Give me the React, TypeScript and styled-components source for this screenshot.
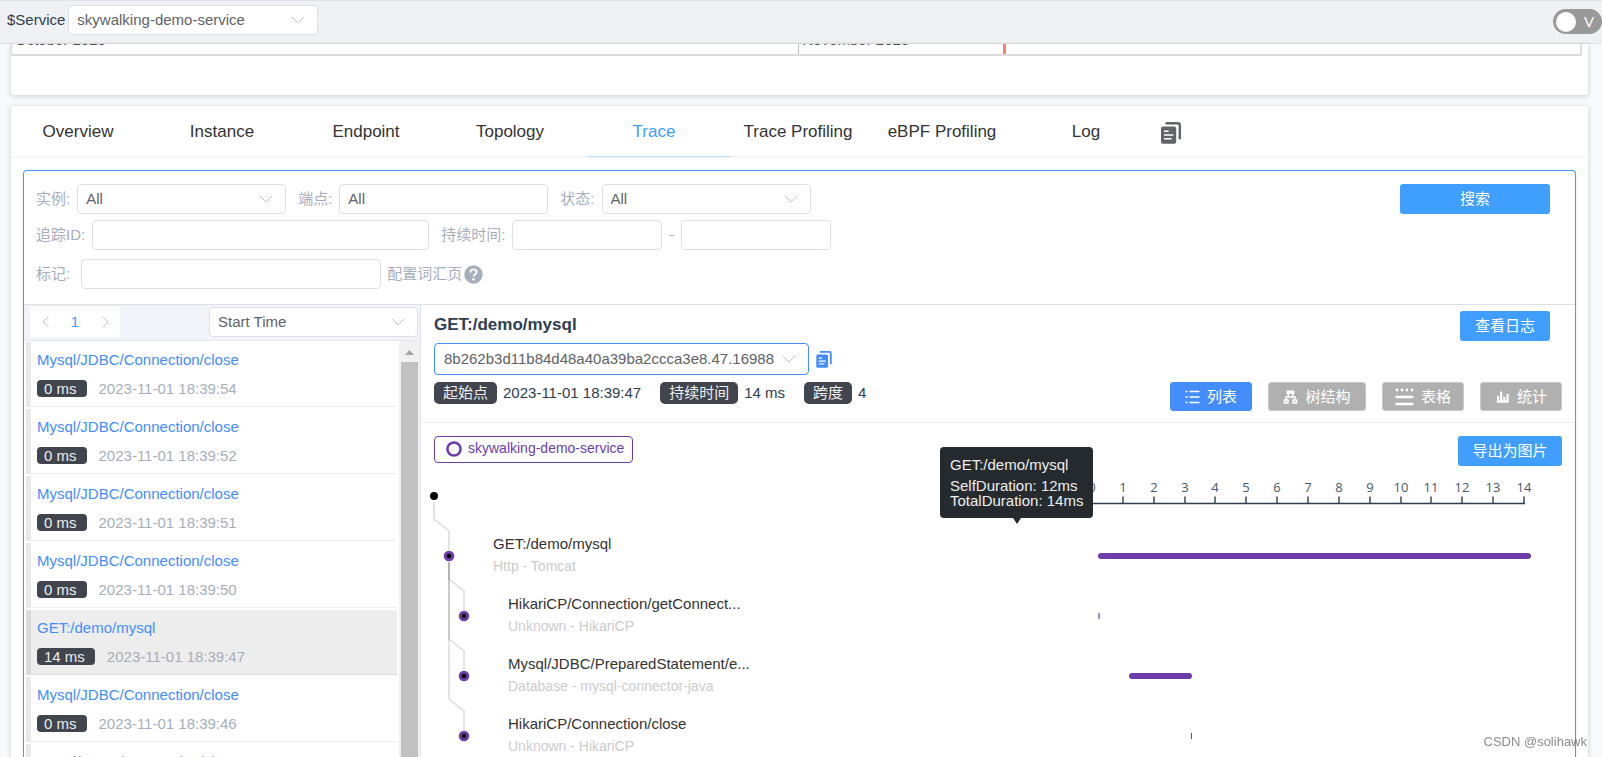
import React, { useState } from "react";
import styled, { createGlobalStyle } from "styled-components";

const GlobalStyle = createGlobalStyle`
  *, *::before, *::after { box-sizing: border-box; }
  body {
    margin: 0;
    background: #f7f9fa;
    color: #2c3e50;
    font-family: "Liberation Sans", Arial, "Noto Sans CJK SC", sans-serif;
    font-size: 15px;
    line-height: 20px;
  }
  button, input, select { font: inherit; color: inherit; }
`;

/* ---------- shared controls ---------- */

const SelectBox = styled.span<{ $width: number; $active?: boolean }>`
  position: relative;
  display: inline-block;
  flex: none;
  width: ${(p) => p.$width}px;
  height: ${(p) => (p.$active ? 32 : 30)}px;

  select {
    appearance: none;
    display: block;
    width: 100%;
    height: 100%;
    padding: 0 28px 0 ${(p) => (p.$active ? 9 : 8)}px;
    border: 1px solid ${(p) => (p.$active ? "#448dfe" : "#dcdfe6")};
    border-radius: 4px;
    background: #fff;
    color: #606266;
    outline: none;
  }

  svg {
    position: absolute;
    right: 13px;
    top: 50%;
    margin-top: -4px;
    pointer-events: none;
  }
`;

function Select(props: { label: string; value: string; width: number; id?: string; active?: boolean }) {
  return (
    <SelectBox $width={props.width} $active={props.active}>
      <select id={props.id} aria-label={props.label} defaultValue={props.value}>
        <option>{props.value}</option>
      </select>
      <svg width="14" height="8" viewBox="0 0 14 8" fill="none" stroke="#c0c4cc">
        <path d="M1 1l6 6 6-6" />
      </svg>
    </SelectBox>
  );
}

const TextInput = styled.input<{ $width: number }>`
  flex: none;
  width: ${(p) => p.$width}px;
  height: 30px;
  padding: 0 8px 2px;
  border: 1px solid #dcdfe6;
  border-radius: 4px;
  background: #fff;
  color: #606266;
  outline: none;
`;

const PrimaryButton = styled.button<{ $width: number }>`
  flex: none;
  width: ${(p) => p.$width}px;
  height: 30px;
  padding: 0;
  border: 0;
  border-radius: 3px;
  background: #409eff;
  color: #fff;
  cursor: pointer;
`;

const PlainButton = styled.button`
  display: flex;
  align-items: center;
  justify-content: center;
  padding: 0;
  border: 0;
  background: none;
  cursor: pointer;
`;

function CopyIcon({ width, height }: { width: number; height: number }) {
  return (
    <svg width={width} height={height} viewBox="0 0 20 22" fill="none">
      <path d="M4.5 1.2h12.3a2 2 0 0 1 2 2v14" stroke="currentColor" strokeWidth="2.4" />
      <rect x="0" y="4.4" width="15.2" height="17.4" rx="2" fill="currentColor" />
      <path d="M3 9.2h4.6M3 13h9.4M3 16.8h7.6" stroke="#fff" strokeWidth="1.5" />
    </svg>
  );
}

/* ---------- page frame ---------- */

const Page = styled.div`
  display: flex;
  flex-direction: column;
  height: 100vh;
  overflow: hidden;
`;

const TopBar = styled.header`
  display: flex;
  flex: none;
  align-items: flex-start;
  justify-content: space-between;
  height: 44px;
  padding: 4px 0 0 7px;
  border: solid #dfe4e8;
  border-width: 1px 0;
  background: #f0f1f5;
`;

const ServiceField = styled.div`
  display: flex;
  align-items: center;
  gap: 3px;
`;

const Toggle = styled.label`
  display: flex;
  align-items: center;
  justify-content: space-between;
  width: 49px;
  height: 25px;
  margin-top: 4px;
  padding: 0 8px 0 3px;
  border-radius: 13px;
  background: #999;
  color: #fff;
  cursor: pointer;

  input {
    appearance: none;
    width: 20px;
    height: 20px;
    margin: 0;
    border-radius: 50%;
    background: #fff;
  }
`;

const Content = styled.main`
  display: flex;
  flex: 1;
  flex-direction: column;
  gap: 11px;
  min-height: 0;
  padding: 0 14px 0 11px;
`;

const Card = styled.section<{ $fill?: boolean }>`
  display: flex;
  flex: ${(p) => (p.$fill ? "1" : "none")};
  flex-direction: column;
  min-height: 0;
  border-radius: ${(p) => (p.$fill ? "3px 3px 0 0" : "0 0 3px 3px")};
  background: #fff;
  box-shadow: 0 1px 4px 1px rgba(0, 0, 0, 0.12);
`;

const EventTimeline = styled.div`
  display: flex;
  height: 12px;
  margin: 0 6px 39px 0;
  overflow: hidden;
  border: solid #dcdcdc;
  border-width: 0 2px 2px 1px;
`;

const Month = styled.div<{ $grow: number }>`
  display: flex;
  flex: ${(p) => p.$grow} 1 0;
  align-items: flex-end;
  padding: 0 0 4px 3px;
  color: #4d4d4d;

  & + & {
    border-left: 1px solid #bfbfbf;
  }
`;

const NowMark = styled.i`
  width: 3px;
  height: 12px;
  margin: 0 0 -4px 94px;
  background: #ff7f6e;
`;

/* ---------- tabs ---------- */

const Tabs = styled.nav`
  display: flex;
  flex: none;
  height: 52px;
  border-bottom: 2px solid #f5f6f8;
`;

const Tab = styled.button<{ $active?: boolean }>`
  flex: none;
  width: 144px;
  height: 51px;
  padding: 2px 10px 0 0;
  border: 0;
  border-bottom: 1px solid ${(p) => (p.$active ? "#bcdcfb" : "transparent")};
  background: none;
  color: ${(p) => (p.$active ? "#409eff" : "#333")};
  font-size: 17px;
  white-space: nowrap;
  cursor: pointer;
`;

const TabTool = styled(PlainButton)`
  height: 54px;
  margin: 0 0 0 -2px;
  color: #626469;
`;

/* ---------- trace panel ---------- */

const TracePanel = styled.div`
  display: flex;
  flex: 1;
  flex-direction: column;
  min-height: 0;
  margin: 12px 12px 0;
  border: 1px solid #409eff;
  border-bottom: 0;
  border-radius: 4px 4px 0 0;
  box-shadow: 0 0 3px rgba(0, 0, 0, 0.1);
  overflow: hidden;
`;

const Filters = styled.form`
  display: flex;
  flex: none;
  align-items: flex-start;
  justify-content: space-between;
  padding: 13px 25px 15px 12px;
  border-bottom: 1px solid #dcdfe6;
  color: #a7aebb;
`;

const FilterRows = styled.div`
  display: flex;
  flex-direction: column;
`;

const FilterRow = styled.div<{ $top?: number }>`
  display: flex;
  align-items: center;
  gap: 12px;
  margin-top: ${(p) => p.$top ?? 0}px;
`;

const Field = styled.div<{ $gap?: number }>`
  display: flex;
  align-items: center;
  gap: ${(p) => p.$gap ?? 7}px;
`;

const VocabularyLink = styled.a`
  display: flex;
  align-items: center;
  gap: 2px;
  margin-left: -6px;
  color: inherit;
  text-decoration: none;
`;

const Body = styled.div`
  display: flex;
  flex: 1;
  min-height: 0;
`;

/* ---------- trace list ---------- */

const ListPane = styled.aside`
  display: flex;
  flex: none;
  flex-direction: column;
  width: 397px;
  border-right: 1px solid #dfe2e8;
`;

const ListHeader = styled.div`
  display: flex;
  flex: none;
  justify-content: space-between;
  height: 36px;
  padding: 2px 2px 0 6px;
  border-bottom: 1px solid #e3e6ec;
  background: #f3f4f9;
`;

const Pager = styled.nav`
  display: flex;
  height: 30px;
  background: #fff;

  button {
    width: 30px;
  }
`;

const PageNumber = styled(PlainButton)`
  color: #409eff;
`;

const ListScroll = styled.div`
  display: flex;
  flex: 1;
  min-height: 0;
`;

const TraceList = styled.ul`
  display: flex;
  flex: 1;
  flex-direction: column;
  gap: 2px;
  margin: 0;
  padding: 1px 2px 0;
  overflow: hidden;
  list-style: none;
`;

const TraceItem = styled.li<{ $selected?: boolean }>`
  flex: none;
  height: 65px;
  padding: 8px 0 0 6px;
  border-left: 5px solid ${(p) => (p.$selected ? "#d9d9d9" : "#e8e8e8")};
  background: ${(p) => (p.$selected ? "#ededed" : "#fff")};
  box-shadow: inset 0 -1px 0 ${(p) => (p.$selected ? "#dadada" : "#ebebeb")};
`;

const TraceLink = styled.a`
  display: block;
  margin-bottom: 10px;
  color: #448dfe;
  text-decoration: none;
`;

const TraceMeta = styled.div`
  display: flex;
  align-items: center;
  gap: 12px;
  height: 17px;
  color: #a7aebb;
`;

const DurationBadge = styled.span`
  height: 17px;
  padding: 0 10px 0 7px;
  border-radius: 4px;
  background: #40454e;
  color: #eee;
  line-height: 17px;
`;

const ScrollTrack = styled.div`
  display: flex;
  flex: none;
  flex-direction: column;
  align-items: center;
  width: 21px;
  background: #f1f1f1;

  svg {
    flex: none;
    margin: 9px 0 7px;
  }
`;

const ScrollThumb = styled.div`
  flex: 1;
  width: 17px;
  background: #c1c1c1;
`;

/* ---------- trace detail ---------- */

const DetailPane = styled.section`
  display: flex;
  flex: 1;
  flex-direction: column;
  min-width: 0;
`;

const DetailHeader = styled.header`
  display: flex;
  flex: none;
  flex-direction: column;
  padding: 6px 13px 11px;
  border-bottom: 1px solid #ebeef0;
`;

const DetailTitleRow = styled.div`
  display: flex;
  justify-content: space-between;
  padding-right: 12px;
`;

const DetailTitle = styled.h1`
  margin: 0;
  font-size: 17px;
  line-height: 28px;
`;

const TraceIdRow = styled.div`
  display: flex;
  align-items: center;
  gap: 7px;
  margin-top: 2px;
  color: #448dfe;
`;

const SummaryRow = styled.div`
  display: flex;
  align-items: flex-start;
  justify-content: space-between;
  margin-top: 7px;
`;

const Summary = styled.dl`
  display: flex;
  gap: 19px;
  margin: 0;
  line-height: 22px;

  div {
    display: flex;
    gap: 6px;
  }

  dt {
    padding: 0 9px;
    border-radius: 5px;
    background: #40454e;
    color: #eee;
  }

  dd {
    margin: 0;
  }
`;

const ViewSwitch = styled.div`
  display: flex;
  gap: 16px;
`;

const ViewButton = styled.button<{ $width: number; $active?: boolean }>`
  display: flex;
  align-items: center;
  justify-content: center;
  gap: 7px;
  width: ${(p) => p.$width}px;
  height: 29px;
  padding: 0;
  border: 1px solid ${(p) => (p.$active ? "#448dfe" : "#c6c8cd")};
  border-radius: 3px;
  background: ${(p) => (p.$active ? "#448dfe" : "#b0b0b0")};
  color: #fff;
  cursor: pointer;
`;

const ChartArea = styled.div`
  position: relative;
  flex: 1;
  min-height: 0;
  padding-top: 13px;
`;

const ChartToolbar = styled.div`
  display: flex;
  align-items: flex-start;
  justify-content: space-between;
  height: 30px;
  padding: 0 13px;
`;

const ServiceTag = styled.span`
  display: flex;
  gap: 6px;
  height: 27px;
  padding: 3px 8px 0 11px;
  border: 1px solid #6c3da8;
  border-radius: 4px;
  color: #6c3da8;
  font-size: 14px;
  line-height: 16px;
`;

const Charts = styled.div`
  display: flex;
  justify-content: space-between;
  padding: 0 35px 0 3px;

  svg {
    flex: none;
    display: block;
  }
`;

const Tooltip = styled.div`
  position: absolute;
  top: 24px;
  right: 482px;
  width: 153px;
  padding: 8px 10px 10px;
  border-radius: 4px;
  background: #252a2f;
  color: #eee;
  line-height: 15px;
  white-space: nowrap;

  p {
    margin: 0;
  }

  p:first-child {
    margin-bottom: 3px;
    line-height: 20px;
  }

  &::after {
    content: "";
    position: absolute;
    top: 100%;
    left: 50%;
    margin-left: -4px;
    border: solid transparent;
    border-width: 6px 4px 0;
    border-top-color: #252a2f;
  }
`;

const Watermark = styled.span`
  position: fixed;
  right: 15px;
  bottom: 5px;
  color: rgba(110, 110, 110, 0.8);
  font-size: 13px;
`;

/* ---------- data ---------- */

const tabs = ["Overview", "Instance", "Endpoint", "Topology", "Trace", "Trace Profiling", "eBPF Profiling", "Log"];

const JDBC_CLOSE = "Mysql/JDBC/Connection/close";

const traces = [
  { name: JDBC_CLOSE, duration: 0, time: "2023-11-01 18:39:54" },
  { name: JDBC_CLOSE, duration: 0, time: "2023-11-01 18:39:52" },
  { name: JDBC_CLOSE, duration: 0, time: "2023-11-01 18:39:51" },
  { name: JDBC_CLOSE, duration: 0, time: "2023-11-01 18:39:50" },
  { name: "GET:/demo/mysql", duration: 14, time: "2023-11-01 18:39:47" },
  { name: JDBC_CLOSE, duration: 0, time: "2023-11-01 18:39:46" },
  { name: JDBC_CLOSE, duration: 0, time: "2023-11-01 18:39:45" },
];

const spans = [
  { name: "GET:/demo/mysql", sub: "Http - Tomcat", depth: 1, start: 18, width: 433, opacity: 1 },
  { name: "HikariCP/Connection/getConnect...", sub: "Unknown - HikariCP", depth: 2, start: 18, width: 2, opacity: 0.6 },
  { name: "Mysql/JDBC/PreparedStatement/e...", sub: "Database - mysql-connector-java", depth: 2, start: 49, width: 63, opacity: 1 },
  { name: "HikariCP/Connection/close", sub: "Unknown - HikariCP", depth: 2, start: 111, width: 1, opacity: 1 },
];

const views = [
  {
    label: "列表",
    width: 82,
    icon: (
      <svg width="15" height="14" viewBox="0 0 15 14" stroke="currentColor" strokeWidth="1.6">
        <path d="M0.5 1.5h2M0.5 7h2M0.5 12.5h2M4.5 1.5h10M4.5 7h10M4.5 12.5h10" />
      </svg>
    ),
  },
  {
    label: "树结构",
    width: 98,
    icon: (
      <svg width="15" height="14" viewBox="0 0 15 14" fill="none" stroke="currentColor">
        <rect x="3.5" y="0.5" width="8" height="3.6" rx="0.8" fill="currentColor" stroke="none" />
        <rect x="1.4" y="9.8" width="3.6" height="3" rx="0.6" strokeWidth="1.8" />
        <rect x="10" y="9.8" width="3.6" height="3" rx="0.6" strokeWidth="1.8" />
        <path d="M5.2 3.8v2.8M9.8 3.8v2.8M3 9.6V7h9v2.6" strokeWidth="1.5" />
      </svg>
    ),
  },
  {
    label: "表格",
    width: 82,
    icon: (
      <svg width="19" height="18" viewBox="0 0 19 18" fill="none" stroke="currentColor" strokeLinecap="round">
        <path d="M2 2h.01M7 2h.01M12 2h.01M17 2h.01" strokeWidth="2.8" />
        <path d="M1.5 9h16M1.5 16h16" strokeWidth="2.4" />
      </svg>
    ),
  },
  {
    label: "统计",
    width: 82,
    icon: (
      <svg width="15" height="14" viewBox="0 0 15 14" stroke="currentColor" strokeWidth="2.2">
        <path d="M3 12.5V6M6.2 12.5V1.5M9.4 12.5V7M12.6 12.5V4M1.9 11.6h11.8" />
      </svg>
    ),
  },
];

/* ---------- charts ---------- */

const rowY = (index: number) => 90 + index * 60;
const nodeX = (depth: number) => 10 + depth * 15;

function SpanTree() {
  return (
    <svg width="400" height="310" fontFamily="inherit">
      <g fill="none" stroke="#000" strokeOpacity="0.11" strokeWidth="2">
        {spans.map((s, i) => {
          const fromY = s.depth === 1 ? 30 : rowY(0);
          const fromX = nodeX(s.depth - 1);
          const y = rowY(i);
          return <path key={i} d={`M${fromX} ${fromY + 6}V${y - 37}L${fromX + 15} ${y - 25}V${y - 6}`} />;
        })}
      </g>
      <circle cx="10" cy="30" r="4" />
      {spans.map((s, i) => (
        <g key={i}>
          <circle cx={nodeX(s.depth)} cy={rowY(i)} r="3.8" fill="#000" stroke="#6c3da8" strokeWidth="3" />
          <text x={nodeX(s.depth) + 44} y={rowY(i) - 7} fontSize="15" fill="#333">
            {s.name}
          </text>
          <text x={nodeX(s.depth) + 44} y={rowY(i) + 15} fontSize="14" fill="#ccc">
            {s.sub}
          </text>
        </g>
      ))}
    </svg>
  );
}

function SpanBars() {
  const tickX = (n: number) => Math.round(12 + (n * 432) / 14);
  return (
    <svg width="460" height="310">
      <path
        d={`M12 38H445${Array.from({ length: 15 }, (_, n) => `M${tickX(n)} 31v7`).join("")}`}
        transform="translate(0 -.5)"
        fill="none"
        stroke="#2c3e50"
        strokeWidth="1.4"
      />
      <g fontFamily='"Open Sans", "Noto Sans", sans-serif' fontSize="13" fill="#4a5868" textAnchor="middle">
        {Array.from({ length: 15 }, (_, n) => (
          <text key={n} x={tickX(n)} y="26">
            {n}
          </text>
        ))}
      </g>
      {spans.map((s, i) => (
        <rect
          key={i}
          x={s.start}
          y={rowY(i) - 3}
          width={s.width}
          height="6"
          rx={s.width > 6 ? 3 : 0}
          fill="#6c3da8"
          fillOpacity={s.opacity}
        />
      ))}
    </svg>
  );
}

/* ---------- page ---------- */

export default function App() {
  const [activeTab, setActiveTab] = useState("Trace");
  const [selected, setSelected] = useState(4);
  const [view, setView] = useState("列表");

  return (
    <Page>
      <GlobalStyle />
      <TopBar>
        <ServiceField>
          <label htmlFor="service">$Service</label>
          <Select id="service" label="Service" value="skywalking-demo-service" width={250} />
        </ServiceField>
        <Toggle>
          <input type="checkbox" />
          <span>V</span>
        </Toggle>
      </TopBar>

      <Content>
        <Card>
          <EventTimeline>
            <Month $grow={787}>October 2023</Month>
            <Month $grow={781}>
              November 2023
              <NowMark />
            </Month>
          </EventTimeline>
        </Card>

        <Card $fill>
          <Tabs>
            {tabs.map((t) => (
              <Tab key={t} $active={t === activeTab} onClick={() => setActiveTab(t)}>
                {t}
              </Tab>
            ))}
            <TabTool aria-label="Copy">
              <CopyIcon width={20} height={22} />
            </TabTool>
          </Tabs>

          <TracePanel>
            <Filters onSubmit={(e) => e.preventDefault()}>
              <FilterRows>
                <FilterRow>
                  <Field>
                    <label htmlFor="instance">实例:</label>
                    <Select id="instance" label="实例" value="All" width={209} />
                  </Field>
                  <Field>
                    <label htmlFor="endpoint">端点:</label>
                    <TextInput id="endpoint" $width={209} defaultValue="All" />
                  </Field>
                  <Field>
                    <label htmlFor="status">状态:</label>
                    <Select id="status" label="状态" value="All" width={209} />
                  </Field>
                </FilterRow>
                <FilterRow $top={6}>
                  <Field>
                    <label htmlFor="trace-id">追踪ID:</label>
                    <TextInput id="trace-id" $width={337} />
                  </Field>
                  <Field>
                    <label htmlFor="duration-min">持续时间:</label>
                    <TextInput id="duration-min" $width={150} />
                    <span>-</span>
                    <TextInput aria-label="最长持续时间" $width={150} />
                  </Field>
                </FilterRow>
                <FilterRow $top={9}>
                  <Field $gap={11}>
                    <label htmlFor="tags">标记:</label>
                    <TextInput id="tags" $width={300} />
                  </Field>
                  <VocabularyLink href="#vocabulary">
                    配置词汇页
                    <svg width="19" height="19" viewBox="0 0 19 19" fill="none">
                      <circle cx="9.5" cy="9.5" r="9.2" fill="#a7aebb" />
                      <path
                        d="M6.4 7.4c0-1.8 1.3-3 3.1-3s3.1 1.1 3.1 2.8c0 2.2-3.1 2.3-3.1 4.4"
                        stroke="#fff"
                        strokeWidth="1.9"
                      />
                      <circle cx="9.5" cy="14.3" r="1.2" fill="#fff" />
                    </svg>
                  </VocabularyLink>
                </FilterRow>
              </FilterRows>
              <PrimaryButton $width={150}>搜索</PrimaryButton>
            </Filters>

            <Body>
              <ListPane>
                <ListHeader>
                  <Pager aria-label="Pages">
                    <PlainButton aria-label="Previous page">
                      <svg width="7" height="12" viewBox="0 0 7 12" fill="none" stroke="#c0c4cc">
                        <path d="M6.5 0.5L1 6l5.5 5.5" />
                      </svg>
                    </PlainButton>
                    <PageNumber>1</PageNumber>
                    <PlainButton aria-label="Next page">
                      <svg width="7" height="12" viewBox="0 0 7 12" fill="none" stroke="#c0c4cc">
                        <path d="M0.5 0.5L6 6 0.5 11.5" />
                      </svg>
                    </PlainButton>
                  </Pager>
                  <Select label="Sort by" value="Start Time" width={209} />
                </ListHeader>
                <ListScroll>
                  <TraceList>
                    {traces.map((t, i) => (
                      <TraceItem key={i} $selected={i === selected} onClick={() => setSelected(i)}>
                        <TraceLink href="#trace">{t.name}</TraceLink>
                        <TraceMeta>
                          <DurationBadge>{t.duration} ms</DurationBadge>
                          <time>{t.time}</time>
                        </TraceMeta>
                      </TraceItem>
                    ))}
                  </TraceList>
                  <ScrollTrack aria-hidden="true">
                    <svg width="9" height="5" viewBox="0 0 9 5">
                      <path d="M0 5L4.5 0 9 5z" fill="#a3a3a3" />
                    </svg>
                    <ScrollThumb />
                  </ScrollTrack>
                </ListScroll>
              </ListPane>

              <DetailPane>
                <DetailHeader>
                  <DetailTitleRow>
                    <DetailTitle>GET:/demo/mysql</DetailTitle>
                    <PrimaryButton $width={90}>查看日志</PrimaryButton>
                  </DetailTitleRow>
                  <TraceIdRow>
                    <Select label="Trace ID" value="8b262b3d11b84d48a40a39ba2ccca3e8.47.16988" width={375} active />
                    <PlainButton aria-label="Copy trace ID">
                      <CopyIcon width={16} height={17} />
                    </PlainButton>
                  </TraceIdRow>
                  <SummaryRow>
                    <Summary>
                      <div>
                        <dt>起始点</dt>
                        <dd>2023-11-01 18:39:47</dd>
                      </div>
                      <div>
                        <dt>持续时间</dt>
                        <dd>14 ms</dd>
                      </div>
                      <div>
                        <dt>跨度</dt>
                        <dd>4</dd>
                      </div>
                    </Summary>
                    <ViewSwitch>
                      {views.map((v) => (
                        <ViewButton
                          key={v.label}
                          $width={v.width}
                          $active={v.label === view}
                          onClick={() => setView(v.label)}
                        >
                          {v.icon}
                          {v.label}
                        </ViewButton>
                      ))}
                    </ViewSwitch>
                  </SummaryRow>
                </DetailHeader>

                <ChartArea>
                  <ChartToolbar>
                    <ServiceTag>
                      <svg width="16" height="18" viewBox="0 0 16 18" fill="none">
                        <circle cx="8" cy="9" r="6.6" stroke="currentColor" strokeWidth="2.5" />
                      </svg>
                      skywalking-demo-service
                    </ServiceTag>
                    <PrimaryButton $width={104}>导出为图片</PrimaryButton>
                  </ChartToolbar>
                  <Charts>
                    <SpanTree />
                    <SpanBars />
                  </Charts>
                  <Tooltip role="tooltip">
                    <p>GET:/demo/mysql</p>
                    <p>SelfDuration: 12ms</p>
                    <p>TotalDuration: 14ms</p>
                  </Tooltip>
                </ChartArea>
              </DetailPane>
            </Body>
          </TracePanel>
        </Card>
      </Content>
      <Watermark>CSDN @solihawk</Watermark>
    </Page>
  );
}
